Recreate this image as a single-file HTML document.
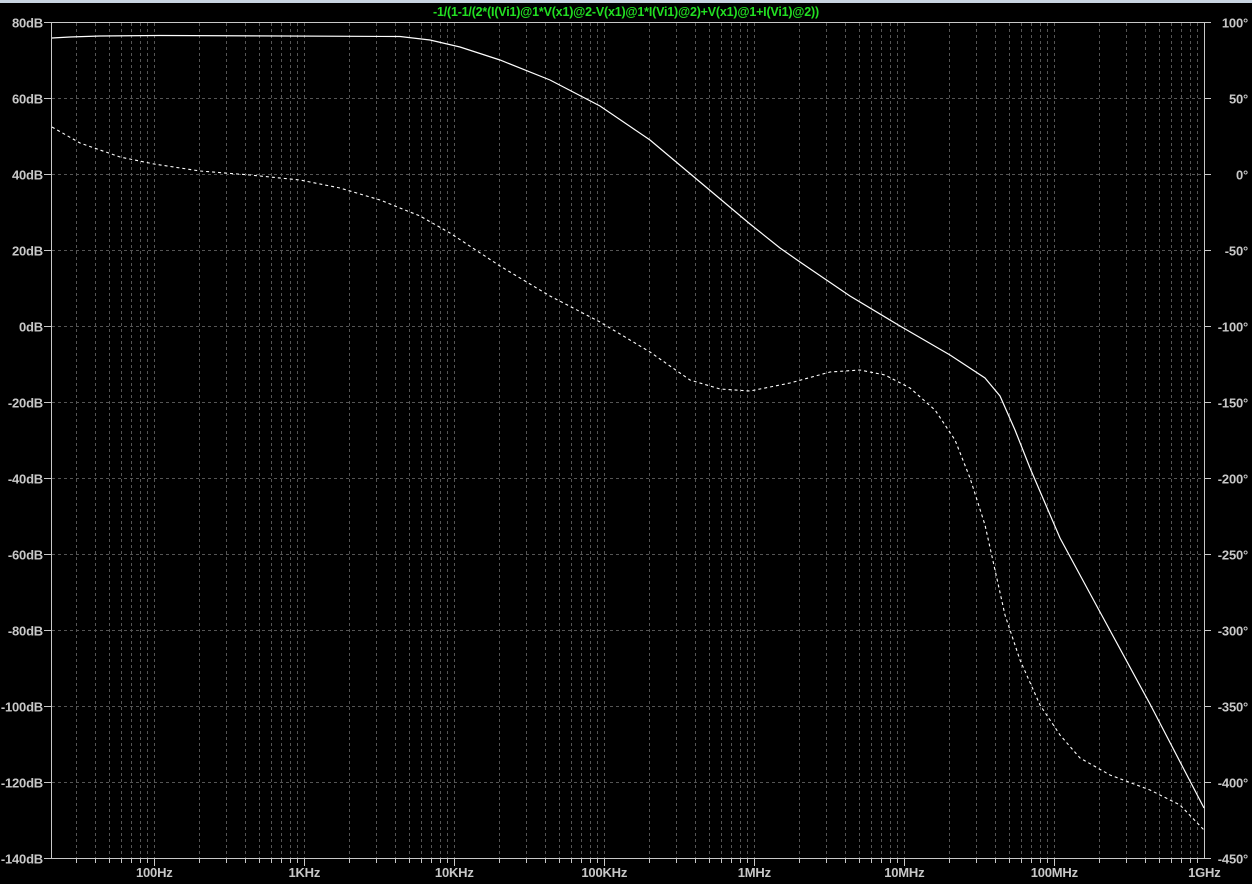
<!DOCTYPE html>
<html><head><meta charset="utf-8"><style>
html,body{margin:0;padding:0;background:#000;width:1252px;height:884px;overflow:hidden}
svg{display:block}
text{font-family:"Liberation Sans",sans-serif;font-size:13px;fill:#c8c8c8;font-weight:bold;letter-spacing:-0.2px}
</style></head><body>
<svg id="s" width="1252" height="884" xmlns="http://www.w3.org/2000/svg">
<rect x="0" y="0" width="1252" height="884" fill="#000"/>
<rect x="0" y="0" width="1252" height="3" fill="#c8d4e0"/>
<text x="626" y="16" text-anchor="middle" style="fill:#22e022;font-size:12.5px">-1/(1-1/(2*(I(Vi1)@1*V(x1)@2-V(x1)@1*I(Vi1)@2)+V(x1)@1+I(Vi1)@2))</text>
<g id="grid"></g>
<rect x="51.5" y="22.5" width="1153" height="836" fill="none" stroke="#c8c8c8" stroke-width="1"/>
<g id="labels"></g>
<polyline fill="none" stroke="#fff" stroke-width="1.2" points="52,38 70,37 100,36 160,35.5 400,36.5 430,40 460,47 500,60 550,80 600,106 650,140 700,182 750,224 780,248 800,262 850,296 900,326 950,355 985,378 1000,396 1015,430 1030,468 1060,538 1100,612 1150,704 1204,808"/>
<polyline fill="none" stroke="#fff" stroke-width="1.1" stroke-dasharray="3,3" points="52,127 80,143 120,157 154,164 200,171 250,175 300,180 340,188 380,200 420,216 450,233 500,266 550,296 600,322 650,352 690,380 720,389 750,391 790,383 830,372 860,370 885,375 910,388 935,410 955,440 970,478 985,525 995,570 1005,615 1020,660 1040,705 1060,735 1080,758 1110,775 1150,790 1180,805 1204,830"/>
</svg>
<script>
var NS="http://www.w3.org/2000/svg",g=document.getElementById('grid'),L=document.getElementById('labels');
function ln(x1,y1,x2,y2,c,d){var l=document.createElementNS(NS,'line');l.setAttribute('x1',x1);l.setAttribute('y1',y1);l.setAttribute('x2',x2);l.setAttribute('y2',y2);l.setAttribute('stroke',c);l.setAttribute('stroke-width',1);if(d)l.setAttribute('stroke-dasharray',d);g.appendChild(l);}
function tx(x,y,t,a){var e=document.createElementNS(NS,'text');e.setAttribute('x',x);e.setAttribute('y',y);e.setAttribute('text-anchor',a);e.textContent=t;L.appendChild(e);}
var x0=154.3,pd=150;
for(var d=-1;d<7;d++){for(var k=1;k<10;k++){var x=Math.round(x0+pd*(d+Math.log10(k)))+0.5;if(x<52||x>1204)continue;
 ln(x,23,x,858,'#555','3,3');ln(x,858,x,(k==1?866:863),'#c8c8c8');}}
var fl=['100Hz','1KHz','10KHz','100KHz','1MHz','10MHz','100MHz','1GHz'];
for(var i=0;i<8;i++)tx(x0+pd*i,877,fl[i],'middle');
for(var j=0;j<12;j++){var y=Math.round(22+j*76)+0.5;if(j>0&&j<11)ln(52,y,1204,y,'#555','3,3');
 ln(44,y,51,y,'#c8c8c8');ln(1204,y,1211,y,'#c8c8c8');
 tx(43,y+5,(80-20*j)+'dB','end');tx(1248,y+5,(100-50*j)+'°','end');}
</script>
</body></html>
